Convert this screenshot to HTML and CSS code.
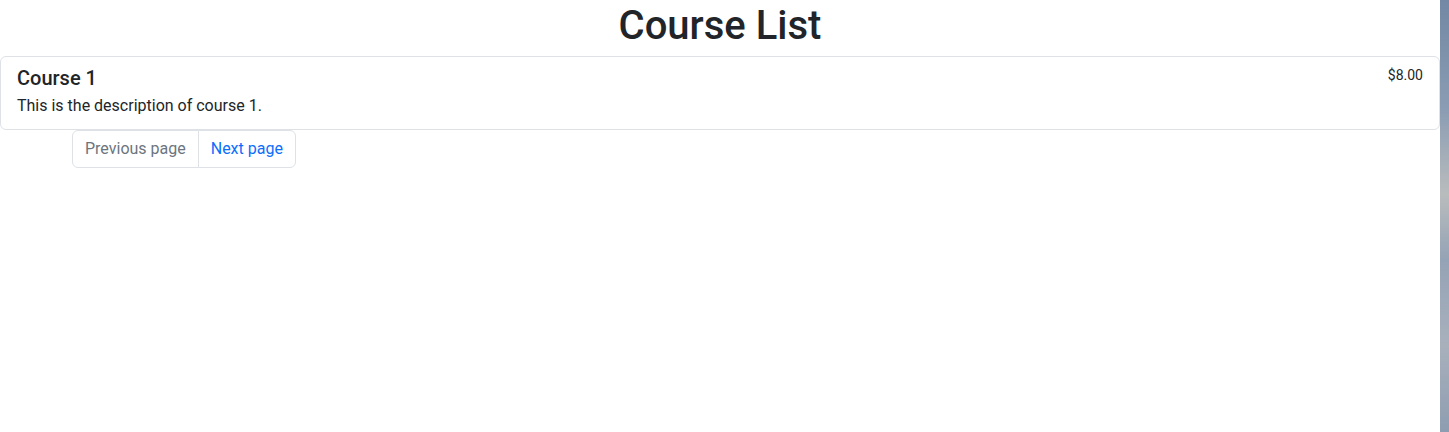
FILE: index.html
```html
<!DOCTYPE html>
<html lang="en">
<head>
    <meta charset="UTF-8">
    <meta name="viewport" content="width=device-width, initial-scale=1.0">
    <title>Course List</title>
    <link rel="stylesheet" href="styles.css">
</head>
<body>
    <div class="screen">
        <!-- Page content -->
        <main class="page">
            <h1 class="page-title">Course List</h1>

            <div class="list-group">
                <div class="list-group-item">
                    <div class="item-head">
                        <h5 class="item-title">Course 1</h5>
                        <small class="item-price">$8.00</small>
                    </div>
                    <p class="item-text">This is the description of course 1.</p>
                </div>
            </div>

            <nav class="pager">
                <ul class="pagination">
                    <li class="page-item disabled"><span class="page-link">Previous page</span></li>
                    <li class="page-item"><a class="page-link" href="#">Next page</a></li>
                </ul>
            </nav>
        </main>

        <!-- Desktop edge -->
        <div class="desktop-edge"></div>
    </div>
</body>
</html>
```

FILE: styles.css
```css
/* Global */
* {
    box-sizing: border-box;
}

body {
    margin: 0;
    font-family: 'Roboto', 'Helvetica Neue', Arial, sans-serif;
    font-size: 16px;
    line-height: 1.5;
    color: #212529;
    background: #fff;
}

.screen {
    display: flex;
    height: 432px;
}

.page {
    flex: 1;
    min-width: 0;
}

/* Title */
.page-title {
    margin: 0 0 6px;
    padding-top: 2px;
    font-size: 40px;
    font-weight: 500;
    line-height: 1.2;
    text-align: center;
}

/* List */
.list-group {
    border: 1px solid #dee2e6;
    border-radius: 6px;
}

.list-group-item {
    padding: 8px 16px;
}

.item-head {
    display: flex;
    justify-content: space-between;
}

.item-title {
    margin: 0 0 4px;
    padding-top: 1px;
    font-size: 20px;
    font-weight: 500;
    line-height: 1.2;
}

.item-price {
    font-size: 14px;
}

.item-text {
    margin: 0 0 3px;
}

/* Pagination */
.pager {
    padding-left: 72px;
}

.pagination {
    display: flex;
    margin: 0;
    padding: 0;
    list-style: none;
}

.page-link {
    display: block;
    padding: 6px 12px;
    border: 1px solid #dee2e6;
    color: #0d6efd;
    text-decoration: none;
    background: #fff;
}

.page-item:first-child .page-link {
    border-radius: 6px 0 0 6px;
}

.page-item:last-child .page-link {
    margin-left: -1px;
    border-radius: 0 6px 6px 0;
}

.page-item.disabled .page-link {
    color: #6c757d;
}

/* Desktop strip on the right */
.desktop-edge {
    width: 9px;
    background: linear-gradient(180deg, #7288a4 0%, #8a9cb3 25%, #b9bcbd 45%, #95a3b6 60%, #a8b0bc 80%, #8e9db1 100%);
}
```
